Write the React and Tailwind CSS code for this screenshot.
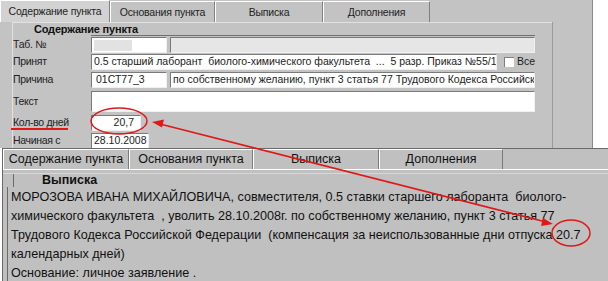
import React from "react";

const topTabs = [
    { label: "Содержание пункта", w: "w-[110px]", active: true },
    { label: "Основания пункта", w: "w-[105px]" },
    { label: "Выписка", w: "w-[108px]" },
    { label: "Дополнения", w: "w-[107px]" },
];

const lowTabs = [
    { label: "Содержание пункта", w: "w-[126px]" },
    { label: "Основания пункта", w: "w-[124px]" },
    { label: "Выписка", w: "w-[126px]" },
    { label: "Дополнения", w: "w-[124px]" },
];

const lines = [
    "МОРОЗОВА ИВАНА МИХАЙЛОВИЧА, совместителя, 0.5 ставки старшего лаборанта  биолого-",
    "химического факультета  , уволить 28.10.2008г. по собственному желанию, пункт 3 статья 77",
    "Трудового Кодекса Российской Федерации  (компенсация за неиспользованные дни отпуска 20.7",
    "календарных дней)",
    "Основание: личное заявление .",
];

function Field({ className = "", children }) {
    return (
        <div
            className={
                "h-full bg-white border-t border-l border-[#7a7a7a] border-b border-r border-b-[#efefef] border-r-[#efefef] px-[2px] flex items-center overflow-hidden whitespace-pre text-[10.5px] text-[#222] " +
                className
            }
        >
            {children}
        </div>
    );
}

function Label({ children }) {
    return (
        <div className="w-[78px] shrink-0 text-[10.5px] tracking-[-0.3px] text-[#222]">{children}</div>
    );
}

export default function App() {
    return (
        <div
            className="relative w-[608px] h-[281px] overflow-hidden bg-white"
            style={{ fontFamily: '"Liberation Sans", Arial, sans-serif' }}
        >
            {/* upper window */}
            <div className="w-[593px] h-[148px] bg-[#c3c3c3] border-r border-[#8a8a8a] overflow-hidden">
                <div className="flex h-[22px]">
                    {topTabs.map((t) => (
                        <div
                            key={t.label}
                            className={
                                t.w +
                                " h-full flex items-center justify-center text-[10.5px] tracking-[-0.2px] text-[#222] border-t border-l border-white border-r border-r-[#808080] " +
                                (t.active ? "bg-[#d2d2d2]" : "bg-[#c3c3c3] mt-px")
                            }
                        >
                            {t.label}
                        </div>
                    ))}
                </div>
                <div className="flex h-[126px]">
                    <div className="w-[12px]" />
                    <div className="w-[540px] border-t border-l border-[#e2e2e2] bg-[#c3c3c3]">
                        <div className="h-[12px] pl-[21px] text-[11px] font-bold leading-[12px] tracking-[-0.2px] text-[#111]">
                            Содержание пункта
                        </div>
                        <div className="ml-[78px] w-[444px] h-px bg-[#707070]" />

                        <div className="flex items-center h-[16px] mt-px">
                            <Label>Таб. №</Label>
                            <Field className="w-[76px]">
                                <div className="w-[38px] h-[11px] bg-[#e2e2e2]" />
                            </Field>
                            <div className="w-[3px]" />
                            <Field className="w-[365px] !bg-[#e6e6e6]" />
                        </div>

                        <div className="flex items-center h-[16px] mt-px">
                            <Label>Принят</Label>
                            <Field className="w-[406px]">
                                0.5 старший лаборант  биолого-химического факультета  ...  5 разр. Приказ №55/1
                            </Field>
                            <div className="ml-[7px] w-[10px] h-[10px] bg-white border-t border-l border-[#808080]" />
                            <div className="ml-[3px] text-[10.5px] text-[#222]">Все</div>
                        </div>

                        <div className="flex items-center h-[16px] mt-[2px]">
                            <Label>Причина</Label>
                            <Field className="w-[76px] pl-[4px]">01СТ77_3</Field>
                            <div className="w-[3px]" />
                            <Field className="w-[365px]">
                                по собственному желанию, пункт 3 статья 77 Трудового Кодекса Российской Федерации
                            </Field>
                        </div>

                        <div className="flex items-center h-[21px] mt-[3px]">
                            <Label>Текст</Label>
                            <Field className="w-[444px]" />
                        </div>

                        <div className="flex items-center h-[16px] mt-[3px]">
                            <Label>Кол-во дней</Label>
                            <Field className="w-[50px] justify-end pr-[6px]">20,7</Field>
                        </div>

                        <div className="flex items-center h-[16px] mt-[2px]">
                            <Label>Начиная с</Label>
                            <Field className="w-[58px]">28.10.2008</Field>
                        </div>
                    </div>
                    <div className="w-[40px] border-l border-[#9a9a9a] bg-[#c3c3c3]" />
                </div>
            </div>

            {/* lower window */}
            <div className="h-[133px] ml-[2px] bg-[#c0c0c0] border-l border-t border-[#6a6a6a]">
                <div className="flex h-[21px] border-b border-white">
                    {lowTabs.map((t) => (
                        <div
                            key={t.label}
                            className={
                                t.w +
                                " h-full flex items-center justify-center text-[12.5px] text-[#111] border-l border-t border-white border-r border-r-[#7a7a7a]"
                            }
                        >
                            {t.label}
                        </div>
                    ))}
                    <div className="flex-1" />
                </div>
                <div className="h-[4px] border-b border-[#d8d8d8]" />
                <div className="ml-[10px] h-[13px] border-l border-[#6a6a6a] pl-[28px] text-[12.5px] font-bold leading-[13px] text-[#111]">
                    Выписка
                </div>
                <div className="ml-[4px] border-l border-[#6a6a6a] pl-[3px] pt-px">
                    {lines.map((l, i) => (
                        <div
                            key={i}
                            className="h-[19px] leading-[19px] text-[12.6px] text-[#111] whitespace-pre"
                        >
                            {l}
                        </div>
                    ))}
                </div>
            </div>

            {/* red annotations */}
            <svg className="absolute inset-0 pointer-events-none" width="608" height="281" viewBox="0 0 608 281">
                <ellipse cx="119" cy="121" rx="28" ry="13" fill="none" stroke="#e01818" strokeWidth="1.5" />
                <line x1="11" y1="129" x2="68" y2="129" stroke="#e01818" strokeWidth="2" />
                <line x1="160" y1="124" x2="546" y2="222" stroke="#e01818" strokeWidth="1.5" />
                <polygon points="152,122 164,119.5 162,127.5" fill="#e01818" />
                <polygon points="553,224 541,226 543,218" fill="#e01818" />
                <ellipse cx="571" cy="233" rx="19" ry="13" fill="none" stroke="#e01818" strokeWidth="1.5" />
            </svg>
        </div>
    );
}
